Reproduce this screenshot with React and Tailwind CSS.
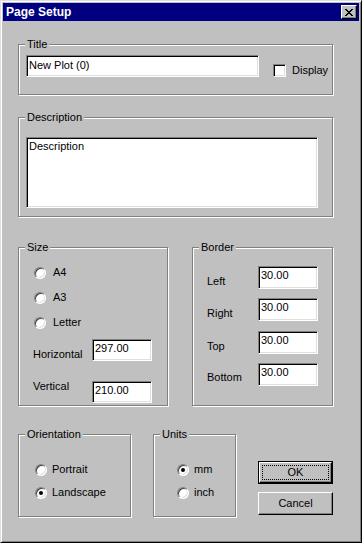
import React from 'react';

const Group = ({ label, className, children }) => (
    <div className={`relative border border-[#808080] shadow-[inset_1px_1px_0_#fff,1px_1px_0_#fff] ${className}`}>
        <span className="absolute left-[6px] -top-[7px] bg-[#c0c0c0] pl-[2px] pr-[2px] leading-[13px]">{label}</span>
        {children}
    </div>
);

const Field = ({ value, className }) => (
    <div className={`bg-white border border-t-[#808080] border-l-[#808080] border-b-white border-r-white shadow-[inset_1px_1px_0_#000,inset_-1px_-1px_0_#dfdfdf] pl-[2px] pt-[2px] leading-[13px] shrink-0 ${className}`}>
        {value}
    </div>
);

const Radio = ({ checked, label, labelGap = 'ml-[5px]' }) => (
    <div className="flex items-center h-[13px]">
        <span className="inline-flex items-center justify-center w-[12px] h-[12px] rounded-full bg-white border border-t-[#808080] border-l-[#808080] border-b-white border-r-white shadow-[inset_1px_1px_0_#404040,inset_-1px_-1px_0_#dfdfdf] shrink-0">
            {checked && <span className="w-[4px] h-[4px] rounded-full bg-black" />}
        </span>
        <span className={labelGap}>{label}</span>
    </div>
);

const CloseIcon = () => (
    <svg width="8" height="7" viewBox="0 0 8 7" shapeRendering="crispEdges">
        <path
            fill="#000"
            d="M0 0h2v1H0zM6 0h2v1H6zM1 1h2v1H1zM5 1h2v1H5zM2 2h4v1H2zM3 3h2v1H3zM2 4h4v1H2zM1 5h2v1H1zM5 5h2v1H5zM0 6h2v1H0zM6 6h2v1H6z"
        />
    </svg>
);

export default function App() {
    return (
        <div className="w-[362px] h-[543px] bg-[#c0c0c0] border border-t-[#dfdfdf] border-l-[#dfdfdf] border-b-black border-r-black shadow-[inset_1px_1px_0_#fff,inset_-1px_-1px_0_#808080] p-[2px] overflow-hidden text-black text-[11px] leading-[13px] font-['Liberation_Sans',Arial,sans-serif]">
            {/* title bar */}
            <div className="h-[18px] bg-[#000080] flex items-center justify-between pl-[3px] pr-[2px]">
                <span className="text-white font-bold text-[12px] leading-[14px]">Page Setup</span>
                <button className="w-[16px] h-[14px] bg-[#c0c0c0] flex items-center justify-center border border-t-white border-l-white border-b-black border-r-black shadow-[inset_-1px_-1px_0_#808080]">
                    <CloseIcon />
                </button>
            </div>

            <div className="pl-[15px]">
                <Group label="Title" className="mt-[23px] w-[315px] h-[51px]">
                    <div className="flex items-start pl-[7px] pt-[10px]">
                        <Field value="New Plot (0)" className="w-[233px] h-[22px] pt-[3px]" />
                        <div className="flex items-center ml-[14px] mt-[9px]">
                            <span className="w-[13px] h-[13px] bg-white border border-t-[#808080] border-l-[#808080] border-b-white border-r-white shadow-[inset_1px_1px_0_#000,inset_-1px_-1px_0_#dfdfdf]" />
                            <span className="ml-[6px]">Display</span>
                        </div>
                    </div>
                </Group>

                <Group label="Description" className="mt-[22px] w-[315px] h-[100px]">
                    <div className="pl-[7px] pt-[19px]">
                        <Field value="Description" className="w-[292px] h-[71px]" />
                    </div>
                </Group>

                <div className="flex items-start mt-[30px]">
                    <Group label="Size" className="w-[150px] h-[159px]">
                        <div className="pl-[15px] pt-[12px] flex flex-col">
                            <div className="h-[25px] flex items-center"><Radio label="A4" labelGap="ml-[7px]" /></div>
                            <div className="h-[25px] flex items-center"><Radio label="A3" labelGap="ml-[7px]" /></div>
                            <div className="h-[25px] flex items-center"><Radio label="Letter" labelGap="ml-[7px]" /></div>
                        </div>
                        <div className="flex items-start pl-[14px] mt-[4px]">
                            <span className="w-[59px] mt-[9px]">Horizontal</span>
                            <Field value="297.00" className="w-[60px] h-[22px]" />
                        </div>
                        <div className="flex items-start pl-[14px] mt-[20px]">
                            <span className="w-[59px] -mt-[1px]">Vertical</span>
                            <Field value="210.00" className="w-[60px] h-[22px]" />
                        </div>
                    </Group>

                    <Group label="Border" className="ml-[24px] w-[141px] h-[159px]">
                        <div className="flex flex-col pl-[14px] pt-[18px]">
                            <div className="flex items-start">
                                <span className="w-[51px] mt-[9px]">Left</span>
                                <Field value="30.00" className="w-[60px] h-[23px]" />
                            </div>
                            <div className="flex items-start mt-[9px]">
                                <span className="w-[51px] mt-[9px]">Right</span>
                                <Field value="30.00" className="w-[60px] h-[23px]" />
                            </div>
                            <div className="flex items-start mt-[10px]">
                                <span className="w-[51px] mt-[9px]">Top</span>
                                <Field value="30.00" className="w-[60px] h-[23px]" />
                            </div>
                            <div className="flex items-start mt-[9px]">
                                <span className="w-[51px] mt-[8px]">Bottom</span>
                                <Field value="30.00" className="w-[60px] h-[23px]" />
                            </div>
                        </div>
                    </Group>
                </div>

                <div className="flex items-start mt-[28px]">
                    <Group label="Orientation" className="w-[113px] h-[83px]">
                        <div className="flex flex-col pl-[16px] pt-[28px]">
                            <Radio label="Portrait" />
                            <div className="mt-[10px]"><Radio checked label="Landscape" /></div>
                        </div>
                    </Group>

                    <Group label="Units" className="ml-[22px] w-[83px] h-[83px]">
                        <div className="flex flex-col pl-[23px] pt-[28px]">
                            <Radio checked label="mm" />
                            <div className="mt-[10px]"><Radio label="inch" /></div>
                        </div>
                    </Group>

                    <div className="ml-[22px] mt-[27px] flex flex-col">
                        <button className="w-[75px] h-[23px] border border-black bg-[#c0c0c0]">
                            <div className="h-full border border-t-white border-l-white border-b-black border-r-black shadow-[inset_-1px_-1px_0_#808080] p-[2px]">
                                <div className="h-full border border-dotted border-black flex items-center justify-center">OK</div>
                            </div>
                        </button>
                        <button className="mt-[8px] w-[75px] h-[23px] bg-[#c0c0c0] border border-t-white border-l-white border-b-black border-r-black shadow-[inset_-1px_-1px_0_#808080] flex items-center justify-center">
                            Cancel
                        </button>
                    </div>
                </div>
            </div>
        </div>
    );
}
